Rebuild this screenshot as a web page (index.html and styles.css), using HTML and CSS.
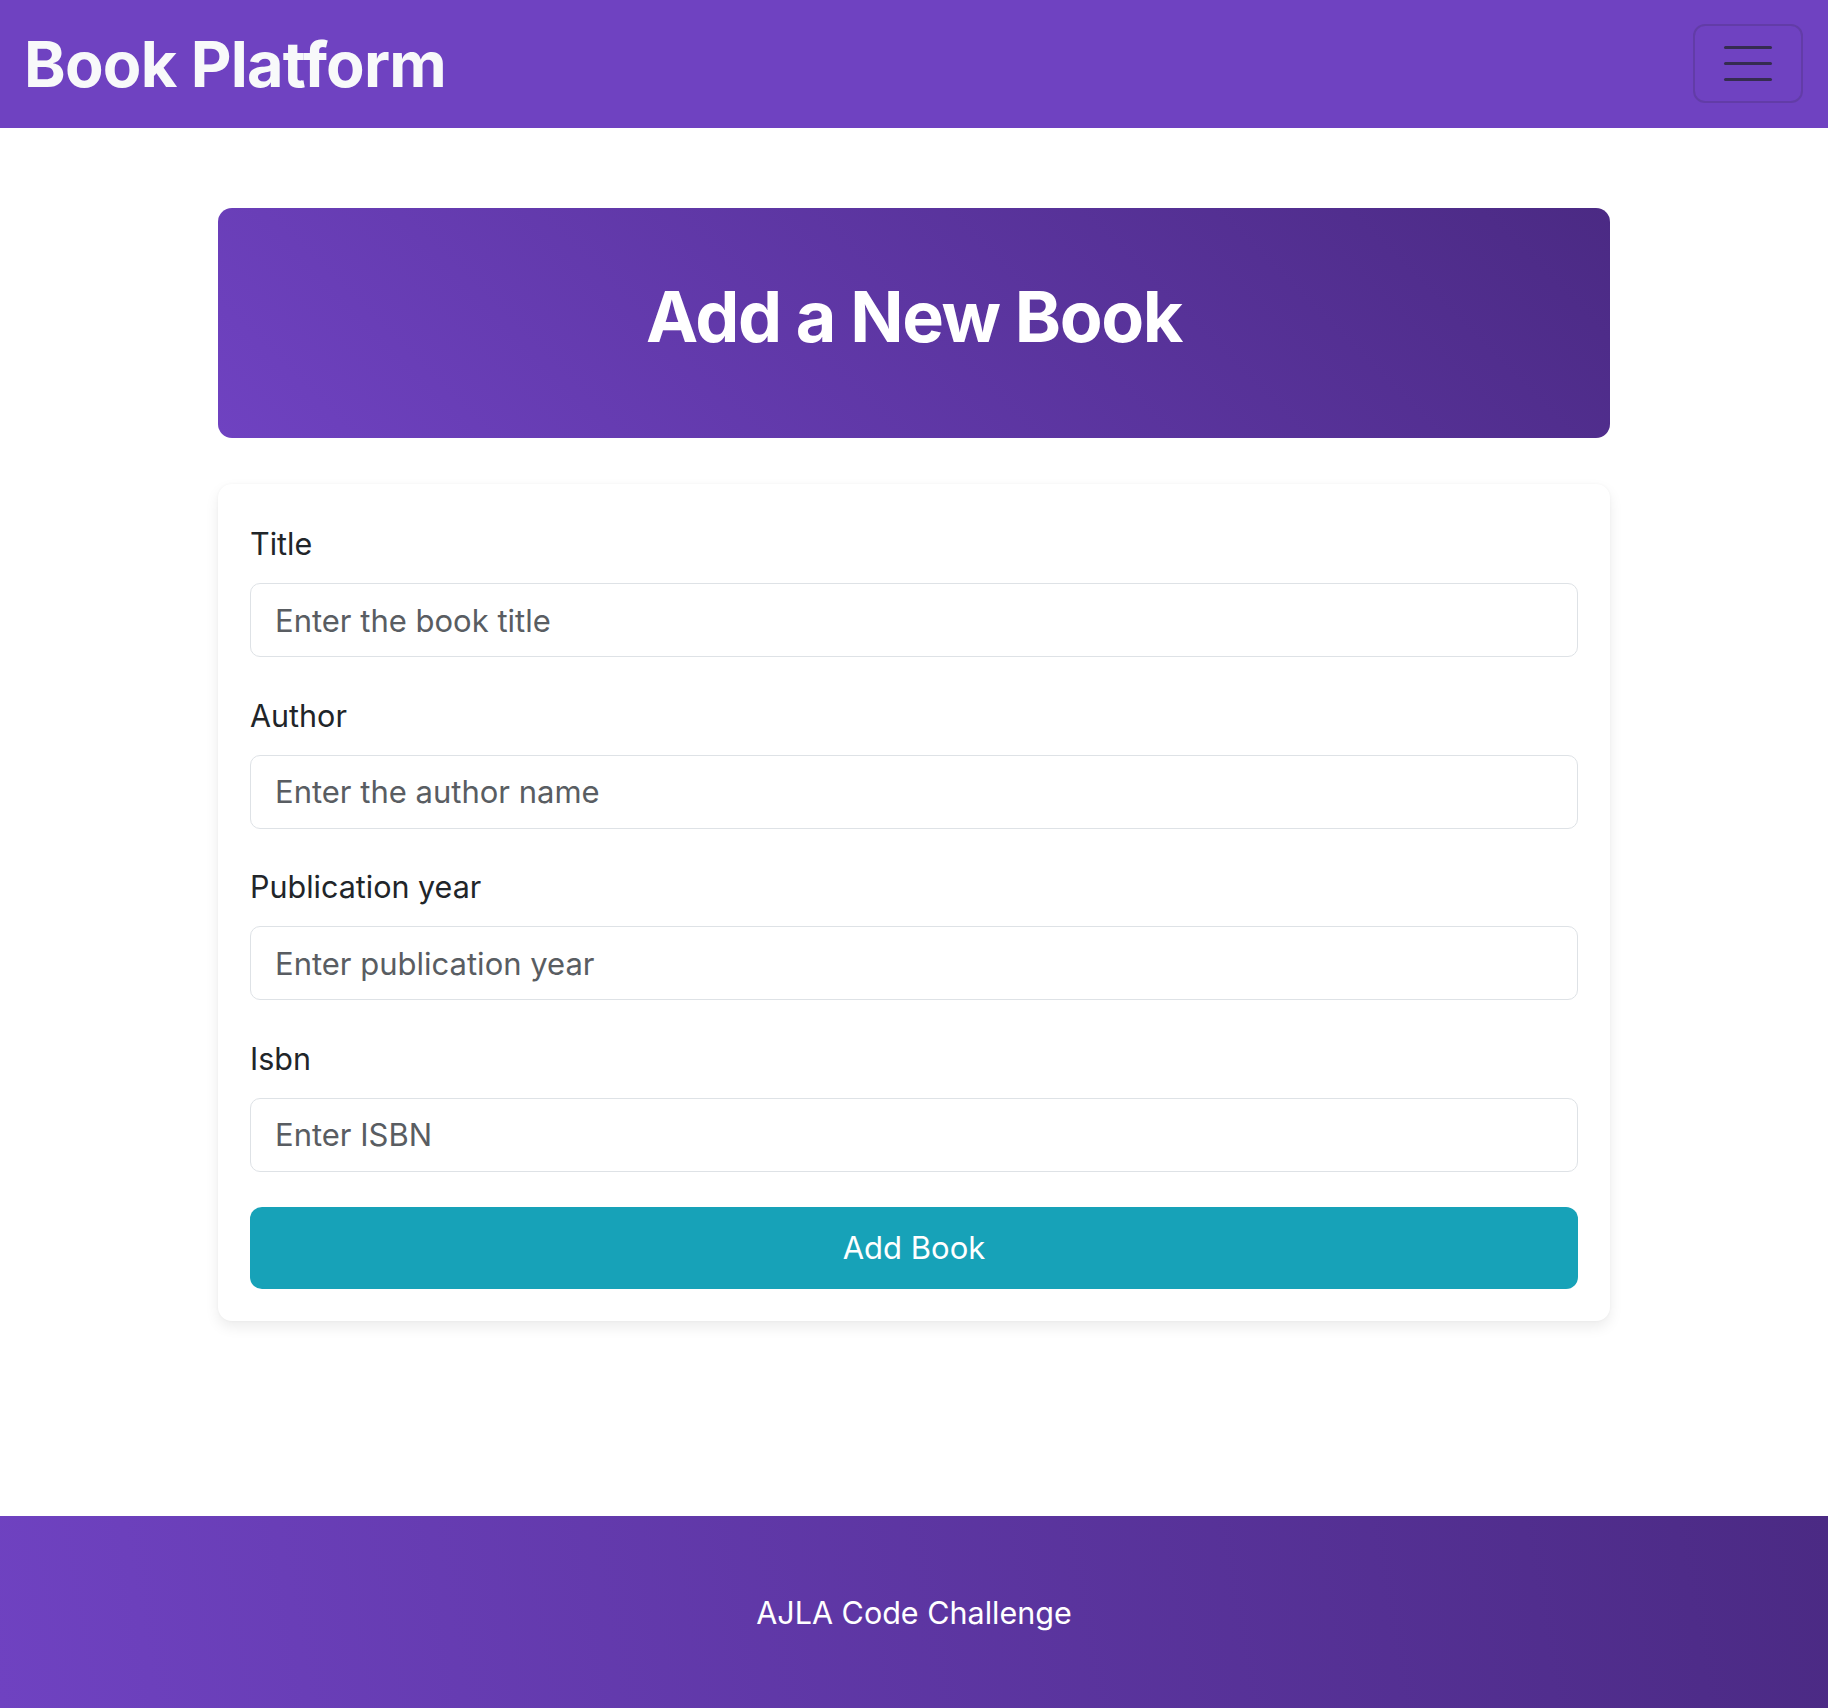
FILE: index.html
```html
<!DOCTYPE html>
<html lang="en">
<head>
<meta charset="utf-8">
<title>Book Platform</title>
<link rel="stylesheet" href="styles.css">
</head>
<body>
<div class="page">
  <nav class="navbar">
    <a class="brand" href="#">Book Platform</a>
    <button class="toggler" type="button" aria-label="Toggle navigation">
      <span class="bar"></span><span class="bar"></span><span class="bar"></span>
    </button>
  </nav>

  <main class="container">
    <header class="hero">
      <h1>Add a New Book</h1>
    </header>

    <form class="form-card">
      <div class="field">
        <label class="label" for="title">Title</label>
        <input class="input" id="title" type="text" placeholder="Enter the book title">
      </div>
      <div class="field">
        <label class="label" for="author">Author</label>
        <input class="input" id="author" type="text" placeholder="Enter the author name">
      </div>
      <div class="field">
        <label class="label" for="year">Publication year</label>
        <input class="input" id="year" type="text" placeholder="Enter publication year">
      </div>
      <div class="field">
        <label class="label" for="isbn">Isbn</label>
        <input class="input" id="isbn" type="text" placeholder="Enter ISBN">
      </div>
      <button class="submit" type="button">Add Book</button>
    </form>
  </main>

  <footer class="footer">
    <p>AJLA Code Challenge</p>
  </footer>
</div>
</body>
</html>
```

FILE: styles.css
```css
* { box-sizing: border-box; }

html, body {
  margin: 0;
  padding: 0;
}

body {
  font-family: Inter, "Noto Sans", "Liberation Sans", sans-serif;
  color: #212529;
  background: #ffffff;
}

.page {
  min-height: 100vh;
  display: flex;
  flex-direction: column;
}

/* Navbar */
.navbar {
  height: 128px;
  background: #6f42c1;
  display: flex;
  align-items: center;
  justify-content: space-between;
  padding: 0 25px 0 24px;
}

.brand {
  color: #f8f9fa;
  text-decoration: none;
  font-weight: 700;
  font-size: 63px;
  letter-spacing: -0.012em;
  line-height: 1;
}

.toggler {
  width: 110px;
  height: 79px;
  border: 2px solid rgba(33, 37, 41, 0.17);
  border-radius: 12px;
  background: transparent;
  display: flex;
  flex-direction: column;
  align-items: center;
  justify-content: center;
  gap: 13px;
  padding: 0;
  margin-top: -1px;
}

.toggler .bar {
  display: block;
  width: 48px;
  height: 3px;
  border-radius: 2px;
  background: rgba(33, 37, 41, 0.75);
}

/* Main */
.container {
  width: 1392px;
  margin: 80px auto 0;
}

.hero {
  height: 230px;
  border-radius: 14px;
  background: linear-gradient(45deg, #6f42c1 0%, #4b2a84 100%);
  display: flex;
  align-items: center;
  justify-content: center;
  padding-bottom: 12px;
}

.hero h1 {
  margin: 0;
  color: #ffffff;
  font-size: 70px;
  font-weight: 700;
  letter-spacing: -0.02em;
  line-height: 1.2;
}

.form-card {
  margin-top: 46px;
  background: #ffffff;
  border-radius: 14px;
  box-shadow: 0 6px 14px rgba(0, 0, 0, 0.08), 0 0 3px rgba(0, 0, 0, 0.04);
  padding: 38px 32px 32px 32px;
}

.field + .field {
  margin-top: 36.5px;
}

.label {
  display: block;
  font-size: 30.5px;
  line-height: 44px;
  margin-bottom: 17px;
  color: #212529;
}

.input {
  display: block;
  width: 100%;
  height: 74px;
  border: 1.5px solid #dee2e6;
  border-radius: 10px;
  padding: 0 24px;
  font-family: inherit;
  font-size: 31px;
  color: #212529;
  background: #ffffff;
}

.input::placeholder {
  color: #595d62;
}

.submit {
  display: block;
  width: 100%;
  height: 82px;
  margin-top: 35px;
  border: none;
  border-radius: 12px;
  background: #17a2b8;
  color: #ffffff;
  font-family: inherit;
  font-size: 31px;
}

/* Footer */
.footer {
  margin-top: auto;
  height: 192px;
  background: linear-gradient(80deg, #6f42c1 0%, #4b2a84 100%);
  display: flex;
  align-items: center;
  justify-content: center;
}

.footer p {
  margin: 0;
  color: #ffffff;
  font-size: 30.5px;
}
```
